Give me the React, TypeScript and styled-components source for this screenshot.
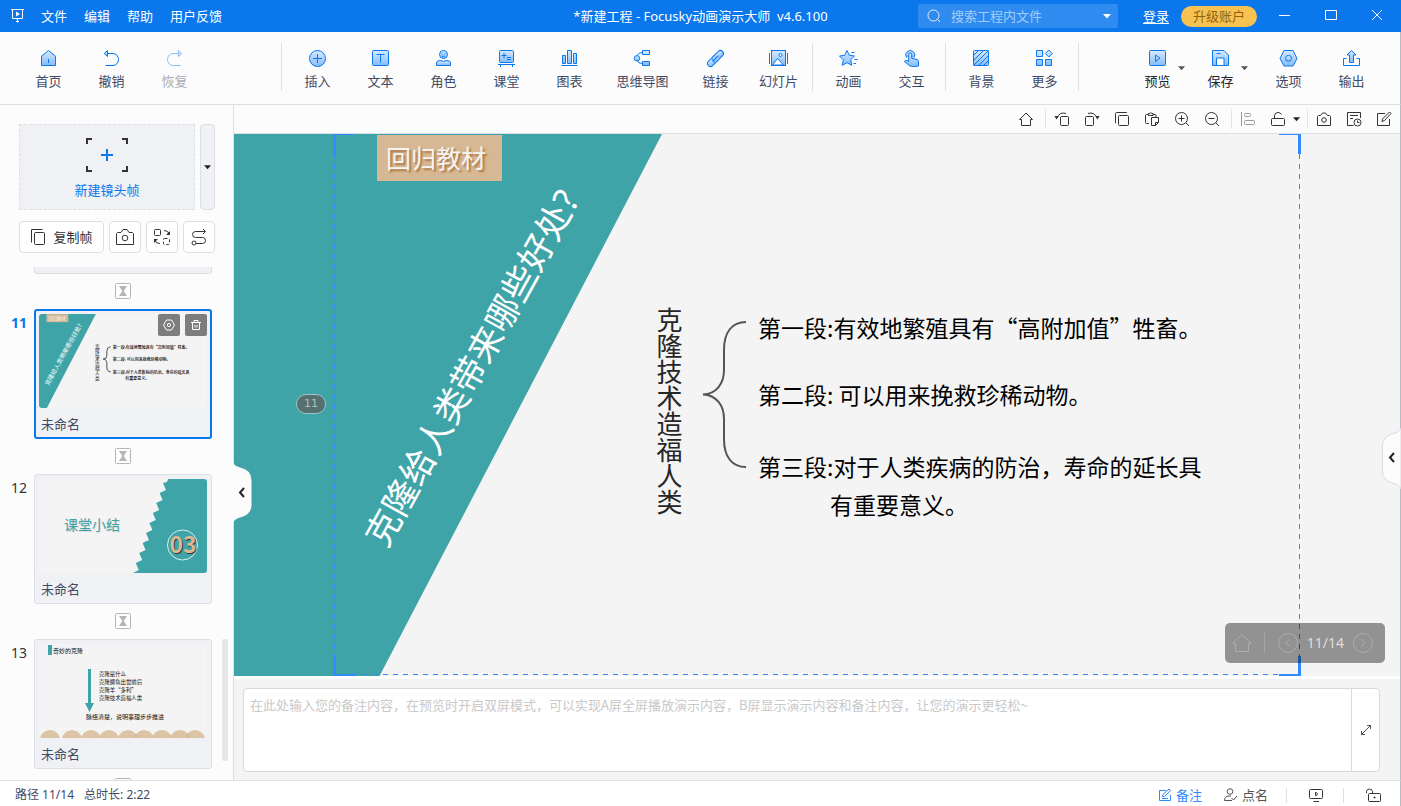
import React from "react";
import styled, { createGlobalStyle, css } from "styled-components";

const color = {
  brand: "#0a77ec",
  panel: "#fcfcfc",
  line: "#dcdfe3",
  card: "#f0f1f4",
  ink: "#3f4a63",
  dark: "#333333",
  teal: "#3ea4a8",
  tan: "#d6b994",
  slide: "#f4f4f4",
  select: "#2f8bff",
};

const Global = createGlobalStyle`
  *, *::before, *::after { box-sizing: border-box; }
  body {
    margin: 0;
    font-family: "Noto Sans", "Noto Sans CJK SC", sans-serif;
    font-size: 13px;
    line-height: 20px;
    color: ${color.ink};
  }
  button, input, textarea { font: inherit; color: inherit; }
  svg { display: block; flex: none; }
`;

const Shell = styled.div`
  display: flex;
  flex-direction: column;
  height: 100vh;
  background: ${color.panel};
  overflow: hidden;
`;

const PlainButton = styled.button`
  display: flex;
  align-items: center;
  justify-content: center;
  padding: 0;
  border: 0;
  background: none;
  cursor: pointer;
  white-space: nowrap;
`;

/* ---------- Title bar ---------- */

const TitleBar = styled.header`
  display: grid;
  grid-template-columns: 1fr auto 1fr;
  align-items: center;
  flex: none;
  height: 32px;
  background: ${color.brand};
  color: #fff;
`;

const MenuBar = styled.nav`
  display: flex;
  align-items: center;
  gap: 17px;
  padding-left: 10px;
`;

const AppTitle = styled.h1`
  margin: 0;
  font-size: 13px;
  font-weight: 400;
  line-height: 20px;
  white-space: pre;
`;

const TitleRight = styled.div`
  display: flex;
  align-items: center;
  justify-content: flex-end;
  padding-right: 1px;
`;

const SearchBox = styled.label`
  display: flex;
  align-items: center;
  gap: 10px;
  width: 200px;
  height: 24px;
  padding: 0 7px 0 9px;
  margin-right: 25px;
  border-radius: 2px;
  background: #2f8bef;
`;

const SearchInput = styled.input`
  flex: 1;
  min-width: 0;
  padding: 0;
  border: 0;
  outline: 0;
  background: none;
  line-height: 20px;
  &::placeholder {
    color: #a3cdf8;
    opacity: 1;
  }
`;

const LoginLink = styled.a`
  margin-right: 12px;
  color: #fff;
  text-decoration: underline;
  text-underline-offset: 2px;
`;

const Upgrade = styled(PlainButton)`
  width: 76px;
  height: 21px;
  margin-right: 5px;
  border-radius: 11px;
  background: #f7c250;
  color: #8f6410;
`;

const WindowButton = styled(PlainButton)`
  width: 46px;
  height: 32px;
`;

/* ---------- Ribbon ---------- */

const Ribbon = styled.div`
  display: flex;
  flex: none;
  height: 73px;
  padding: 0 17px;
  border-right: 1px solid #b8bcc2;
  border-bottom: 1px solid ${color.line};
`;

const RibbonGroup = styled.div<{ $lead?: boolean; $push?: boolean }>`
  display: flex;
  ${(p) => p.$lead && "margin-right: 73px;"}
  ${(p) => p.$push && "margin-left: auto;"}
`;

const RibbonRule = styled.span`
  width: 1px;
  height: 48px;
  margin: 11px 4px 0 2px;
  background: ${color.line};
`;

const RibbonCell = styled.div<{ $after?: number }>`
  position: relative;
  margin-right: ${(p) => p.$after ?? 0}px;
`;

const RibbonButton = styled(PlainButton)<{ $wide?: boolean; $tone?: "dark" | "off" }>`
  flex-direction: column;
  justify-content: flex-start;
  width: ${(p) => (p.$wide ? 83 : 63)}px;
  height: 72px;
  padding-top: 14px;
  color: ${(p) => (p.$tone === "dark" ? "#22262e" : p.$tone === "off" ? "#a9adb5" : color.ink)};
  svg {
    opacity: ${(p) => (p.$tone === "off" ? 0.45 : 1)};
  }
`;

const RibbonDrop = styled(PlainButton)`
  position: absolute;
  left: 49px;
  top: 30px;
  width: 12px;
  height: 12px;
`;

/* ---------- Body ---------- */

const Body = styled.div`
  position: relative;
  display: flex;
  flex: 1;
  min-height: 0;
  border-right: 1px solid #b8bcc2;
`;

const Sidebar = styled.aside`
  position: relative;
  display: flex;
  flex-direction: column;
  flex: none;
  width: 234px;
  border-right: 1px solid ${color.line};
`;

const FrameTools = styled.div`
  display: flex;
  flex-wrap: wrap;
  gap: 11px 5px;
  padding: 19px 18px 14px 19px;
`;

const NewFrame = styled(PlainButton)`
  flex-direction: column;
  gap: 8px;
  width: 176px;
  height: 86px;
  padding-top: 4px;
  border: 1px dashed ${color.line};
  background: ${color.card};
  color: ${color.brand};
`;

const NewFrameDrop = styled(PlainButton)`
  width: 15px;
  height: 86px;
  border: 1px solid ${color.line};
  border-radius: 4px;
  background: ${color.card};
`;

const ToolButton = styled(PlainButton)<{ $wide?: boolean }>`
  gap: 7px;
  width: ${(p) => (p.$wide ? 85 : 32)}px;
  height: 32px;
  border: 1px solid ${color.line};
  border-radius: 4px;
  background: #fff;
  color: ${color.dark};
`;

const FrameList = styled.ol`
  flex: 1;
  min-height: 0;
  margin: 0;
  padding: 0;
  overflow: hidden;
  list-style: none;
`;

const FrameItem = styled.li`
  display: grid;
  grid-template-columns: 34px 178px;
`;

const FrameNumber = styled.span<{ $active?: boolean }>`
  padding: 4px 7px 0 0;
  text-align: right;
  font-size: 14px;
  color: ${(p) => (p.$active ? color.brand : "#333")};
  font-weight: ${(p) => (p.$active ? 700 : 400)};
`;

const cardFace = css`
  border: 1px solid ${color.line};
  background: ${color.card};
`;

const CardTail = styled.div`
  ${cardFace}
  grid-column: 2;
  height: 7px;
  border-top: 0;
  border-radius: 0 0 3px 3px;
`;

const Card = styled.article<{ $active?: boolean }>`
  ${cardFace}
  position: relative;
  height: 130px;
  padding: 4px;
  border-radius: 3px;
  ${(p) => p.$active && `padding: 3px; border: 2px solid ${color.brand};`}
`;

const Thumb = styled.svg`
  width: 168px;
  height: 94px;
  border-radius: 3px;
  background: ${color.slide};
`;

const CardName = styled.p`
  margin: 0;
  padding: 6px 2px 0;
`;

const CardActions = styled.div`
  position: absolute;
  top: 3px;
  right: 3px;
  display: flex;
  gap: 5px;
`;

const CardAction = styled(PlainButton)`
  width: 22px;
  height: 22px;
  border-radius: 2px;
  background: #7d7d7d;
`;

const Interval = styled.div`
  grid-column: 2;
  display: flex;
  align-items: flex-start;
  justify-content: center;
  height: 35px;
  padding-top: 9px;
`;

const ScrollThumb = styled.span`
  position: absolute;
  right: 5px;
  bottom: 19px;
  width: 6px;
  height: 122px;
  border-radius: 2px;
  background: #e6e6e6;
`;

const Workspace = styled.main`
  display: flex;
  flex-direction: column;
  flex: 1;
  min-width: 0;
`;

const CanvasBar = styled.div`
  display: flex;
  align-items: center;
  justify-content: flex-end;
  flex: none;
  height: 29px;
  padding-right: 1px;
  border-bottom: 1px solid ${color.line};
`;

const CanvasButton = styled(PlainButton)<{ $off?: boolean }>`
  width: 30px;
  height: 28px;
  color: ${(p) => (p.$off ? "#9a9a9a" : color.dark)};
`;

const CanvasDrop = styled(PlainButton)`
  justify-content: flex-start;
  width: 10px;
  height: 28px;
`;

const CanvasRule = styled.span`
  width: 1px;
  height: 20px;
  margin: 0 1px 0 4px;
  background: #e4e4e4;
`;

/* ---------- Slide canvas ---------- */

const Stage = styled.section`
  position: relative;
  flex: 1;
  min-height: 0;
  overflow: hidden;
  background: ${color.slide};
`;

const TealSide = styled.div`
  position: absolute;
  inset: 0 auto 0 0;
  width: 428px;
  background: ${color.teal};
  clip-path: polygon(0 0, 100% 0, 34% 100%, 0 100%);
`;

const ChapterTag = styled.div`
  position: absolute;
  left: 143px;
  top: 1px;
  width: 125px;
  height: 46px;
  padding-left: 9px;
  background: ${color.tan};
  color: #f4f4f4;
  font-size: 25px;
  line-height: 46px;
  text-shadow: 2px 2px 2px #b0743e;
  white-space: nowrap;
`;

const SlantedTitle = styled.h2`
  position: absolute;
  left: 141px;
  top: 389px;
  margin: 0;
  color: #fff;
  font-size: 35px;
  font-weight: 400;
  line-height: 40px;
  white-space: nowrap;
  transform: rotate(-61deg);
  transform-origin: 0 50%;
`;

const VerticalTopic = styled.p`
  position: absolute;
  left: 414px;
  top: 173px;
  margin: 0;
  color: #262626;
  font-size: 26px;
  line-height: 40px;
  writing-mode: vertical-rl;
  white-space: nowrap;
`;

const Brace = styled.svg`
  position: absolute;
  left: 468px;
  top: 186px;
`;

const Point = styled.p<{ $x: number; $y: number }>`
  position: absolute;
  left: ${(p) => p.$x}px;
  top: ${(p) => p.$y}px;
  margin: 0;
  color: #000;
  font-family: "Noto Sans CJK SC", sans-serif;
  font-size: 23px;
  line-height: 40px;
  white-space: pre;
`;

const dash = (dir: string) =>
  `repeating-linear-gradient(${dir}, ${color.select} 0 5px, transparent 5px 10px)`;

const Selection = styled.div`
  position: absolute;
  inset: 0 99px 0 99px;
  pointer-events: none;
  background:
    ${dash("to bottom")} 1px 0 / 1px 100% no-repeat,
    ${dash("to bottom")} calc(100% - 1px) 0 / 1px 100% no-repeat,
    ${dash("to right")} 0 calc(100% - 1px) / 100% 1px no-repeat;
`;

const Corner = styled.span<{ $v: "top" | "bottom"; $h: "left" | "right" }>`
  position: absolute;
  ${(p) => p.$v}: 0;
  ${(p) => p.$h}: 0;
  width: 22px;
  height: 20px;
  border: 0 solid ${color.select};
  border-${(p) => p.$v}-width: ${(p) => (p.$v === "top" ? 1 : 2)}px;
  border-${(p) => p.$h}-width: 3px;
`;

const FrameBadge = styled.span`
  position: absolute;
  left: 62px;
  top: 260px;
  width: 30px;
  height: 20px;
  border: 1px solid #9cc4c4;
  border-radius: 10px;
  background: #56706f;
  color: #b5c0c0;
  font-family: "DejaVu Sans", sans-serif;
  font-size: 11px;
  line-height: 18px;
  text-align: center;
`;

const Pager = styled.div`
  position: absolute;
  right: 15px;
  bottom: 13px;
  display: flex;
  align-items: center;
  justify-content: space-between;
  width: 160px;
  height: 40px;
  padding: 0 12px 0 7px;
  border-radius: 5px;
  background: rgba(0, 0, 0, 0.4);
  color: #dedede;
  font-size: 14px;
`;

const PagerRule = styled.span`
  width: 1px;
  height: 20px;
  background: #a6a6a6;
`;

const PagerMain = styled.div`
  display: flex;
  align-items: center;
  gap: 9px;
`;

const SideHandle = styled.button<{ $side: "left" | "right" }>`
  position: absolute;
  ${(p) => (p.$side === "left" ? "left: 233px; top: 357px;" : "right: -1px; top: 323px;")}
  padding: 0;
  border: 0;
  background: none;
  cursor: pointer;
`;

/* ---------- Notes ---------- */

const NotesPanel = styled.section`
  flex: none;
  padding: 9px 20px 8px 9px;
  border-top: 3px solid #fff;
  background: ${color.slide};
`;

const NotesBox = styled.div`
  display: flex;
  height: 84px;
  border: 1px solid #d5d9e0;
  border-radius: 4px;
  background: #fff;
  overflow: hidden;
`;

const NotesInput = styled.textarea`
  flex: 1;
  min-width: 0;
  padding: 6px;
  border: 0;
  outline: 0;
  resize: none;
  background: none;
  font-family: "Noto Sans CJK SC", sans-serif;
  &::placeholder {
    color: #c9c9c9;
    opacity: 1;
  }
`;

const NotesExpand = styled(PlainButton)`
  width: 28px;
  border-left: 1px solid #d5d9e0;
  color: #555;
`;

/* ---------- Status bar ---------- */

const StatusBar = styled.footer`
  display: flex;
  align-items: center;
  flex: none;
  height: 26px;
  padding: 3px 19px 0 15px;
  border-top: 1px solid ${color.line};
  border-right: 1px solid #b8bcc2;
  background: #fff;
  font-size: 12px;
`;

const StatusText = styled.span`
  margin-right: 10px;
`;

const StatusActions = styled.div`
  display: flex;
  align-items: center;
  margin-left: auto;
  font-size: 13px;
`;

const StatusButton = styled(PlainButton)<{ $active?: boolean; $after?: number }>`
  gap: 4px;
  margin-right: ${(p) => p.$after ?? 0}px;
  color: ${(p) => (p.$active ? color.select : "#555")};
`;

const StatusRule = styled.span<{ $after: number }>`
  width: 1px;
  height: 15px;
  margin-right: ${(p) => p.$after}px;
  background: ${color.line};
`;

/* ---------- Icons ---------- */

const Caret = ({ fill = "#555", w = 8 }: { fill?: string; w?: number }) => (
  <svg width={w} height="5" viewBox="0 0 8 5" aria-hidden="true">
    <path d="M0 0H8L4 4.5Z" fill={fill} />
  </svg>
);

const glyphs: Record<string, React.ReactNode> = {
  home: (
    <>
      <path d="M5.5 10.2 12.5 4.5 19.5 10.2V19.5H5.5Z" />
      <path d="M12.5 13v4" />
    </>
  ),
  undo: (
    <g fill="none">
      <path d="M8.5 4.5 5.2 7.5 8.5 10.5Z" fill="url(#sky)" />
      <path d="M8.5 7.5H14a5.5 6 0 0 1 0 12H6.5" />
    </g>
  ),
  redo: (
    <g fill="none">
      <path d="M16.5 4.5 19.8 7.5 16.5 10.5Z" fill="url(#sky)" />
      <path d="M16.5 7.5H11a5.5 6 0 0 0 0 12h7.5" />
    </g>
  ),
  insert: (
    <>
      <circle cx="12.5" cy="12.5" r="8" />
      <path d="M12.5 8v9M8 12.5h9" />
    </>
  ),
  text: (
    <>
      <rect x="4.5" y="4.5" width="16" height="15" rx="1" />
      <path d="M8.5 8.5h8M12.5 8.5v8" />
    </>
  ),
  role: (
    <>
      <circle cx="12.5" cy="8.5" r="4" />
      <path d="M5.5 19.5V17q0-2.500 3.500-2.500 3.500 1.600 7 0 3.500 0 3.500 2.500v2.500Z" />
      <path d="M11 7.500v.8M14 7.500v.8M11 10q1.500 1 3 0" />
    </>
  ),
  classroom: (
    <>
      <rect x="5.5" y="4.5" width="14" height="12" rx="1" />
      <path d="M4 18.500h17M6.500 18.500v2.500M18.500 18.500v2.500M7.500 9.500h5M10 7v5M13 11.500h4M13 13.500h4" />
    </>
  ),
  chart: (
    <>
      <path d="M5.5 17.5v-8h3v8ZM10.5 17.5v-13h4v13ZM16.5 17.5v-10h3v10Z" />
      <path d="M4.5 19.5h16" />
    </>
  ),
  mind: (
    <>
      <path d="M7.5 9.5Q8 6.5 12.5 6.5M7.5 15Q8 17.5 12.5 17.5" fill="none" />
      <circle cx="7" cy="12.3" r="2.7" />
      <path d="M12.5 4.5h7v4h-7ZM12.5 15.5h7v4h-7Z" />
    </>
  ),
  link: (
    <>
      <g transform="rotate(-45 12.5 12.5)">
        <rect x="2.5" y="9.5" width="13" height="6" rx="3" />
        <rect x="9.5" y="9.5" width="13" height="6" rx="3" />
        <path d="M10 10h5v5h-5Z" stroke="none" fill="#a3cdfb" />
        <path d="M8.5 12.5h8" />
      </g>
    </>
  ),
  slides: (
    <>
      <rect x="5.5" y="4.5" width="14" height="15" />
      <path d="M6.5 19 11.5 12.5 17.5 19Z" fill="#fff" />
      <circle cx="14.5" cy="9" r="1.5" fill="#fff" />
      <path d="M3.5 7v11M21.5 7v11" />
    </>
  ),
  anim: (
    <>
      <path d="M11 4.5 13.3 9.3 18.5 10 14.7 13.8 15.7 19.3 11 16.7 6.3 19.3 7.3 13.8 3.5 10 8.7 9.3Z" />
      <path d="M15.5 6.5h3M18.5 13.5h3M17.5 17.5h2.5" />
    </>
  ),
  touch: (
    <>
      <path d="M7.5 11.5a4.5 4.5 0 1 1 7.500 0" />
      <path d="M9.7 15.5V8.3a1.5 1.5 0 0 1 3 0v4l5.300 1.200q1.500.5 1.500 2v4.500q-5 1.200-8.500 0L5.300 15.500q.8-2 2.700-1Z" />
    </>
  ),
  background: (
    <>
      <rect x="4.5" y="4.5" width="15" height="15" rx="1" />
      <path d="M4.5 9.5l5-5M4.5 14.5l10-10M4.5 19.5l15-15M9.5 19.5l10-10M14.5 19.5l5-5" />
    </>
  ),
  more: (
    <path d="M4.5 4.5h6v6h-6ZM4.5 13.5h6v6h-6ZM13.5 13.5h6v6h-6ZM16.8 4l3.500 3.500L16.800 11 13.300 7.500Z" />
  ),
  preview: (
    <>
      <rect x="4.5" y="4.5" width="16" height="15" rx="1" />
      <path d="M10.5 9 15 12.2l-4.500 3.300Z" />
    </>
  ),
  save: (
    <>
      <path d="M4.5 4.5H16l4.500 4.500v10.500h-16Z" />
      <path d="M8.5 19.5v-7.500h7.500v7.500Z" fill="#fff" />
      <path d="M8.5 7.5h4" />
    </>
  ),
  options: (
    <>
      <path d="M8 4.5h9l4 8-4 7.500H8l-4-7.500Z" />
      <circle cx="12.5" cy="12.3" r="3" />
    </>
  ),
  exportOut: (
    <>
      <path d="M12.5 4.500 17 9h-2.500v7.500h-4V9H8Z" />
      <path d="M7.5 12.5h-3v7h16v-7h-3" fill="none" />
    </>
  ),
};

const RibbonIcon = ({ name }: { name: string }) => (
  <svg width="25" height="25" viewBox="0 0 25 25" fill="url(#sky)" stroke={color.brand} aria-hidden="true">
    {glyphs[name]}
  </svg>
);

const lineGlyphs: Record<string, React.ReactNode> = {
  home: <path d="M2.5 9.5 9 3l6.500 6.500h-2v6h-9v-6Z" />,
  rotateLeft: (
    <>
      <rect x="7.5" y="6.5" width="8" height="9" rx="1" />
      <path d="M13 3.5Q6.5 1.5 4 8" />
      <path d="M1.5 6 5.5 6 3.5 9.5Z" fill="currentColor" stroke="none" />
    </>
  ),
  rotateRight: (
    <>
      <rect x="2.5" y="6.5" width="8" height="9" rx="1" />
      <path d="M5 3.5Q11.5 1.5 14 8" />
      <path d="M12.5 6 16.5 6 14.5 9.5Z" fill="currentColor" stroke="none" />
    </>
  ),
  copy: (
    <>
      <rect x="5.5" y="5.5" width="10" height="10" rx="1" />
      <path d="M3 13.5q-.5 0-.5-1v-9q0-1 1-1h9.500q1 0 1 .5" />
    </>
  ),
  paste: (
    <>
      <path d="M6 13.5H3.5q-1 0-1-1v-7q0-1 1-1h2M10 4.5h2q1 0 1 1v1.500" />
      <path d="M5.5 5.5v-2h1.500q.8-2 1.600 0h1.400v2Z" />
      <path d="M8.5 7.5h7v5l-3 3h-4ZM12.5 15.5v-3h3" />
    </>
  ),
  zoomIn: (
    <>
      <circle cx="8.5" cy="8.5" r="6" />
      <path d="M5.5 8.5h6M8.5 5.5v6M13 13l3 3" />
    </>
  ),
  zoomOut: (
    <>
      <circle cx="8.5" cy="8.5" r="6" />
      <path d="M5.5 8.5h6M13 13l3 3" />
    </>
  ),
  align: (
    <>
      <path d="M2.5 2v14" />
      <rect x="5.5" y="3.5" width="6" height="3" rx="1" />
      <rect x="5.5" y="10.5" width="10" height="4" rx="1" />
    </>
  ),
  unlock: (
    <>
      <rect x="2.5" y="8.5" width="13" height="7" rx="1" />
      <path d="M5.5 8.5V6q0-3.500 3.500-3.500 2.500 0 3.500 2" />
    </>
  ),
  camera: (
    <>
      <path d="M2.5 15.5v-9l1-1h2l2-2.500h3l2 2.500h2l1 1v9Z" />
      <circle cx="9" cy="10" r="2.3" />
    </>
  ),
  history: (
    <>
      <path d="M15.5 8V2.5h-13v13h6M5 5.5h8M5 8.5h3" />
      <circle cx="12.5" cy="12.5" r="3.5" />
      <path d="M12.5 10.5v2h2" />
    </>
  ),
  edit: (
    <>
      <path d="M10 3.5H2.5v12h12V9" />
      <path d="M7 11.5 7.5 9 14.5 2 16 3.5 9.5 10.5Z" />
    </>
  ),
};

const LineIcon = ({ name }: { name: string }) => (
  <svg width="18" height="18" viewBox="0 0 18 18" fill="none" stroke="currentColor" aria-hidden="true">
    {lineGlyphs[name]}
  </svg>
);

const Hourglass = () => (
  <svg width="16" height="16" viewBox="0 0 16 16" aria-hidden="true">
    <rect x=".5" y=".5" width="15" height="15" rx="1" fill="#fdfdfd" stroke="#b5b5b5" />
    <path d="M4 3h8L9 7.5v1L12 13H4L7 8.5v-1Z" fill="#b5b5b5" />
  </svg>
);

const HandleShape = ({ side }: { side: "left" | "right" }) => (
  <svg width="19" height="61" viewBox="0 0 19 61" aria-hidden="true">
    <g transform={side === "right" ? "translate(19 0) scale(-1 1)" : undefined}>
      <path
        d="M0 0Q1 4 7 5.500 18.500 8 18.500 18V43Q18.500 53 7 55.500 1 57 0 61Z"
        fill={color.panel}
        stroke={side === "right" ? "#dddddd" : "none"}
      />
    </g>
    <path d={side === "left" ? "M11 26 7 30.500 11 35" : "M12 25 8 29.500 12 34"} fill="none" stroke="#222" strokeWidth="2" />
  </svg>
);

/* ---------- Thumbnails ---------- */

const cjk = "'Noto Sans CJK SC', sans-serif";

const CloneThumb = () => (
  <Thumb viewBox="0 0 966 541" preserveAspectRatio="none" role="img" aria-label="回归教材" fontFamily={cjk}>
    <path d="M0 0H327L45 541H0Z" fill={color.teal} />
    <rect x="43" y="1" width="125" height="46" fill={color.tan} />
    <text x="53" y="33" fontSize="25" fill="#f4f4f4">回归教材</text>
    <text transform="translate(54 415) rotate(-61)" fontSize="35" fill="#fff">克隆给人类带来哪些好处?</text>
    <g fontSize="27" fill="#262626" textAnchor="middle">
      {[..."克隆技术造福人类"].map((ch, i) => (
        <text key={i} x="336" y={195 + i * 26}>{ch}</text>
      ))}
    </g>
    <path d="M412 188Q390 190 390 215V238Q390 260 369 260 390 260 390 284V306Q390 332 412 333" fill="none" stroke="#333" strokeWidth="5" />
    <g fontSize="23" fill="#000" stroke="#000" strokeWidth=".4">
      <text x="424" y="204">第一段:有效地繁殖具有“高附加值”牲畜。</text>
      <text x="424" y="271">第二段: 可以用来挽救珍稀动物。</text>
      <text x="424" y="343">第三段:对于人类疾病的防治，寿命的延长具</text>
      <text x="496" y="381">有重要意义。</text>
    </g>
  </Thumb>
);

/* Torn-paper edge: each tooth runs from its tip down to a notch, then out to the next tip. */
const teeth = Array.from({ length: 9 }, (_, i) => {
  const x = 124 - i * 3.4;
  const y = 4 + i * 10;
  return `L${x} ${y}L${x + 3} ${y + 7}`;
}).join("");

const SummaryThumb = () => (
  <Thumb viewBox="0 0 168 94" role="img" aria-label="课堂小结" fontFamily={cjk}>
    <path d={`M168 0H129L128 3${teeth}L94 94H168Z`} fill={color.teal} />
    <g fontSize="14">
      <text x="26" y="52" fill="#dcdcdc">课堂小结</text>
      <text x="25" y="51" fill={color.teal}>课堂小结</text>
    </g>
    <circle cx="143.5" cy="66" r="15" fill="none" stroke="#dff0f0" />
    <g fontSize="23" fontWeight="700" textAnchor="middle">
      <text x="145" y="75" fill="#3a3a3a">03</text>
      <text x="144" y="74" fill={color.tan}>03</text>
    </g>
  </Thumb>
);

const StepsThumb = () => (
  <Thumb viewBox="0 0 168 94" role="img" aria-label="奇妙的克隆" fontFamily={cjk}>
    <rect x="9" y="1" width="4" height="10" fill={color.teal} />
    <path d="M49 25h3v34h3L50.5 68 46 59h3Z" fill={color.teal} />
    <g fontSize="6" fill="#111">
      <text x="14" y="9">奇妙的克隆</text>
      <text x="47" y="75">脉络清楚，说明事理步步推进</text>
    </g>
    <g fontSize="5.4" fill="#111">
      <text x="60" y="31.5">克隆是什么</text>
      <text x="60" y="39.5">克隆鲫鱼出世前后</text>
      <text x="60" y="47.5">克隆羊“多利”</text>
      <text x="60" y="55.5">克隆技术造福人类</text>
    </g>
    {[11, 33, 52, 70, 89, 105, 123, 141, 156].map((x) => (
      <path key={x} d={`M${x - 10} 94C${x - 9} 90 ${x - 5} 86 ${x} 86S${x + 9} 90 ${x + 10} 94Z`} fill={color.tan} fillOpacity=".8" />
    ))}
  </Thumb>
);

const frames = [
  { no: 11, name: "未命名", active: true, art: <CloneThumb /> },
  { no: 12, name: "未命名", active: false, art: <SummaryThumb /> },
  { no: 13, name: "未命名", active: false, art: <StepsThumb /> },
];

type Tool = { icon: string; label: string; wide?: boolean; tone?: "dark" | "off"; drop?: boolean; after?: number };

const leadTools: Tool[] = [
  { icon: "home", label: "首页" },
  { icon: "undo", label: "撤销" },
  { icon: "redo", label: "恢复", tone: "off" },
];
const toolGroups: Tool[][] = [
  [
    { icon: "insert", label: "插入" },
    { icon: "text", label: "文本" },
    { icon: "role", label: "角色" },
    { icon: "classroom", label: "课堂" },
    { icon: "chart", label: "图表" },
    { icon: "mind", label: "思维导图", wide: true },
    { icon: "link", label: "链接" },
    { icon: "slides", label: "幻灯片" },
  ],
  [
    { icon: "anim", label: "动画" },
    { icon: "touch", label: "交互" },
  ],
  [
    { icon: "background", label: "背景" },
    { icon: "more", label: "更多" },
  ],
];
const endTools: Tool[] = [
  { icon: "preview", label: "预览", tone: "dark", drop: true },
  { icon: "save", label: "保存", tone: "dark", drop: true, after: 5 },
  { icon: "options", label: "选项" },
  { icon: "exportOut", label: "输出" },
];

const RibbonTool = ({ tool }: { tool: Tool }) => (
  <RibbonCell $after={tool.after}>
    <RibbonButton $wide={tool.wide} $tone={tool.tone} disabled={tool.tone === "off"}>
      <RibbonIcon name={tool.icon} />
      {tool.label}
    </RibbonButton>
    {tool.drop && (
      <RibbonDrop aria-label={`${tool.label}选项`}>
        <Caret w={7} />
      </RibbonDrop>
    )}
  </RibbonCell>
);

const CanvasTool = ({ icon, label, off }: { icon: string; label: string; off?: boolean }) => (
  <CanvasButton $off={off} aria-label={label}>
    <LineIcon name={icon} />
  </CanvasButton>
);

export default function App() {
  return (
    <Shell>
      <Global />
      <svg width="0" height="0" aria-hidden="true">
        <defs>
          <linearGradient id="sky" x1="0" y1="0" x2="0" y2="1">
            <stop offset="0" stopColor="#d6e9ff" />
            <stop offset="1" stopColor="#84bcfa" />
          </linearGradient>
        </defs>
      </svg>

      <TitleBar>
        <MenuBar>
          <svg width="14" height="18" viewBox="0 0 14 18" fill="none" stroke="#fff" aria-hidden="true">
            <path d="M1 2.5h13M2.5 2.5v9h10v-9M7.5 11.5v4M6 14.5h3" />
            <path d="M6 4.5 10 7 6 9.5Z" fill="#fff" stroke="none" />
          </svg>
          {["文件", "编辑", "帮助", "用户反馈"].map((m) => (
            <PlainButton key={m}>{m}</PlainButton>
          ))}
        </MenuBar>
        <AppTitle>{"*新建工程 - Focusky动画演示大师  v4.6.100"}</AppTitle>
        <TitleRight>
          <SearchBox>
            <svg width="14" height="14" viewBox="0 0 14 14" fill="none" stroke="#e4f0fd" aria-hidden="true">
              <circle cx="6.5" cy="6.5" r="5.5" />
              <path d="M10.5 10.5 13 13" />
            </svg>
            <SearchInput placeholder="搜索工程内文件" aria-label="搜索工程内文件" />
            <Caret fill="#fff" />
          </SearchBox>
          <LoginLink href="#login">登录</LoginLink>
          <Upgrade>升级账户</Upgrade>
          <WindowButton aria-label="最小化">
            <svg width="12" height="12" viewBox="0 0 12 12" stroke="#fff"><path d="M0 5.5h11" /></svg>
          </WindowButton>
          <WindowButton aria-label="最大化">
            <svg width="12" height="12" viewBox="0 0 12 12" stroke="#fff" fill="none"><path d="M.5 .5h11v9H.5Z" /></svg>
          </WindowButton>
          <WindowButton aria-label="关闭">
            <svg width="12" height="12" viewBox="0 0 12 12" stroke="#fff"><path d="M1 0l10 10M11 0 1 10" /></svg>
          </WindowButton>
        </TitleRight>
      </TitleBar>

      <Ribbon>
        <RibbonGroup $lead>
          {leadTools.map((t) => <RibbonTool key={t.label} tool={t} />)}
        </RibbonGroup>
        <RibbonRule />
        {toolGroups.map((group, i) => (
          <React.Fragment key={i}>
            <RibbonGroup>
              {group.map((t) => <RibbonTool key={t.label} tool={t} />)}
            </RibbonGroup>
            <RibbonRule />
          </React.Fragment>
        ))}
        <RibbonGroup $push>
          {endTools.map((t) => <RibbonTool key={t.label} tool={t} />)}
        </RibbonGroup>
      </Ribbon>

      <Body>
        <Sidebar>
          <FrameTools>
            <NewFrame>
              <svg width="42" height="34" viewBox="0 0 42 34" fill="none" aria-hidden="true">
                <path d="M1 6V1h5M36 1h5v5M41 28v5h-5M6 33H1v-5" stroke="#333" strokeWidth="2" />
                <path d="M15 17h12M21 11v12" stroke={color.brand} strokeWidth="2" />
              </svg>
              新建镜头帧
            </NewFrame>
            <NewFrameDrop aria-label="更多镜头帧类型"><Caret fill="#222" w={7} /></NewFrameDrop>
            <ToolButton $wide>
              <svg width="16" height="18" viewBox="0 0 16 18" fill="none" stroke="currentColor" aria-hidden="true">
                <path d="M1.5 14.5v-13h11" />
                <rect x="4.5" y="4.5" width="10" height="12" rx="1" />
              </svg>
              复制帧
            </ToolButton>
            <ToolButton aria-label="截图">
              <svg width="20" height="18" viewBox="0 0 20 18" fill="none" stroke="currentColor" aria-hidden="true">
                <path d="M1.5 16.5v-11l1-1H6l2-3h4l2 3h3.500l1 1v11Z" />
                <circle cx="10" cy="10" r="2.8" />
              </svg>
            </ToolButton>
            <ToolButton aria-label="替换帧">
              <svg width="18" height="18" viewBox="0 0 18 18" fill="none" stroke="currentColor" aria-hidden="true">
                <rect x="1.5" y="1.5" width="6" height="6" rx="1" />
                <rect x="10.5" y="10.5" width="6" height="6" rx="1" strokeDasharray="3 2" />
                <path d="M11 2.5q4 0 5 3M7 15.5q-4 0-5-3" />
                <path d="M17 3v4h-4ZM1 15v-4h4Z" fill="currentColor" stroke="none" />
              </svg>
            </ToolButton>
            <ToolButton aria-label="编辑路径">
              <svg width="18" height="18" viewBox="0 0 18 18" fill="none" stroke="currentColor" aria-hidden="true">
                <path d="M15 3.5H5.5a3 3 0 0 0 0 6h7a3 3 0 0 1 0 6H6M13 1l2.500 2.500L13 6" />
                <circle cx="4" cy="15" r="2" />
              </svg>
            </ToolButton>
          </FrameTools>

          <FrameList>
            <FrameItem>
              <CardTail />
              <Interval><Hourglass /></Interval>
            </FrameItem>
            {frames.map((f) => (
              <FrameItem key={f.no}>
                <FrameNumber $active={f.active}>{f.no}</FrameNumber>
                <Card $active={f.active}>
                  {f.art}
                  {f.active && (
                    <CardActions>
                      <CardAction aria-label="设置">
                        <svg width="12" height="12" viewBox="0 0 12 12" fill="none" stroke="#fff">
                          <path d="M3.5 1h5L11.5 6 8.5 11h-5L.5 6Z" />
                          <circle cx="6" cy="6" r="1.6" />
                        </svg>
                      </CardAction>
                      <CardAction aria-label="删除">
                        <svg width="12" height="12" viewBox="0 0 12 12" fill="none" stroke="#fff">
                          <path d="M1 3.5h10M4 3.5v-2h4v2M2.5 3.5v7h7v-7M5 6v2.500M7 6v2.500" />
                        </svg>
                      </CardAction>
                    </CardActions>
                  )}
                  <CardName>{f.name}</CardName>
                </Card>
                <Interval><Hourglass /></Interval>
              </FrameItem>
            ))}
          </FrameList>
          <ScrollThumb />
        </Sidebar>

        <Workspace>
          <CanvasBar>
            <CanvasTool icon="home" label="主页" />
            <CanvasRule />
            <CanvasTool icon="rotateLeft" label="向左旋转" />
            <CanvasTool icon="rotateRight" label="向右旋转" />
            <CanvasTool icon="copy" label="复制" />
            <CanvasTool icon="paste" label="粘贴" />
            <CanvasTool icon="zoomIn" label="放大" />
            <CanvasTool icon="zoomOut" label="缩小" />
            <CanvasRule />
            <CanvasTool icon="align" label="对齐" off />
            <CanvasTool icon="unlock" label="锁定" />
            <CanvasDrop aria-label="锁定选项"><Caret fill="#222" w={7} /></CanvasDrop>
            <CanvasRule />
            <CanvasTool icon="camera" label="截图" />
            <CanvasTool icon="history" label="历史记录" />
            <CanvasTool icon="edit" label="编辑" />
          </CanvasBar>

          <Stage>
            <TealSide />
            <ChapterTag>回归教材</ChapterTag>
            <SlantedTitle>克隆给人类带来哪些好处?</SlantedTitle>
            <VerticalTopic>克隆技术造福人类</VerticalTopic>
            <Brace width="46" height="150" viewBox="0 0 46 150" fill="none" stroke="#555" strokeWidth="2" aria-hidden="true">
              <path d="M44 2C30 2 22 12 22 30V50C22 64 14 74 1 74.500 14 75 22 85 22 99V119C22 137 30 147 44 147" />
            </Brace>
            <Point $x={524} $y={173}>第一段:有效地繁殖具有“高附加值”牲畜。</Point>
            <Point $x={524} $y={240}>第二段: 可以用来挽救珍稀动物。</Point>
            <Point $x={524} $y={312}>第三段:对于人类疾病的防治，寿命的延长具</Point>
            <Point $x={596} $y={350}>有重要意义。</Point>
            <Selection>
              <Corner $v="top" $h="left" />
              <Corner $v="top" $h="right" />
              <Corner $v="bottom" $h="left" />
              <Corner $v="bottom" $h="right" />
            </Selection>
            <FrameBadge>11</FrameBadge>
            <Pager>
              <PlainButton aria-label="首帧">
                <svg width="20" height="20" viewBox="0 0 20 20" fill="none" stroke="#adadad">
                  <path d="M.8 10.5 10 1.5l9.200 9H16.500v8h-13v-8Z" />
                </svg>
              </PlainButton>
              <PagerRule />
              <PagerMain>
                <PlainButton aria-label="上一帧">
                  <svg width="20" height="20" viewBox="0 0 20 20" fill="none" stroke="#adadad">
                    <circle cx="10" cy="10" r="9.5" /><path d="M12 6l-4 4 4 4" />
                  </svg>
                </PlainButton>
                <span>11/14</span>
                <PlainButton aria-label="下一帧">
                  <svg width="20" height="20" viewBox="0 0 20 20" fill="none" stroke="#adadad">
                    <circle cx="10" cy="10" r="9.5" /><path d="M8 6l4 4-4 4" />
                  </svg>
                </PlainButton>
              </PagerMain>
            </Pager>
          </Stage>

          <NotesPanel>
            <NotesBox>
              <NotesInput
                aria-label="备注"
                placeholder="在此处输入您的备注内容，在预览时开启双屏模式，可以实现A屏全屏播放演示内容，B屏显示演示内容和备注内容，让您的演示更轻松~"
              />
              <NotesExpand aria-label="展开备注">
                <svg width="12" height="12" viewBox="0 0 12 12" fill="none" stroke="currentColor">
                  <path d="M7 1.5h3.500V5M1.500 7v3.500H5M10.500 1.500l-9 9" />
                </svg>
              </NotesExpand>
            </NotesBox>
          </NotesPanel>
        </Workspace>

        <SideHandle $side="left" aria-label="收起左侧面板"><HandleShape side="left" /></SideHandle>
        <SideHandle $side="right" aria-label="展开右侧面板"><HandleShape side="right" /></SideHandle>
      </Body>

      <StatusBar>
        <StatusText>路径 11/14</StatusText>
        <StatusText>总时长: 2:22</StatusText>
        <StatusActions>
          <StatusButton $active $after={21}>
            <svg width="14" height="14" viewBox="0 0 14 14" fill="none" stroke="currentColor" aria-hidden="true">
              <path d="M8 2.5H1.5v10h11V7M4 10.5h6" />
              <path d="M4.5 8.5 5 6.5 11 1 12.5 2.5 6.5 8.5Z" />
            </svg>
            备注
          </StatusButton>
          <StatusButton $after={18}>
            <svg width="15" height="14" viewBox="0 0 15 14" fill="none" stroke="currentColor" aria-hidden="true">
              <circle cx="7" cy="3.5" r="2.8" />
              <path d="M9 12.5H1.5Q1.5 8 6 8h2M8.5 10l2 2 3.500-4" />
            </svg>
            点名
          </StatusButton>
          <StatusRule $after={22} />
          <StatusButton aria-label="播放设置" $after={19}>
            <svg width="15" height="14" viewBox="0 0 15 14" fill="none" stroke="#333">
              <rect x=".5" y="1.5" width="13" height="9" rx="1" />
              <path d="M4.5 13.5h5.500M6.500 4.500v3h1l1-1.500-1-1.500Z" />
            </svg>
          </StatusButton>
          <StatusRule $after={22} />
          <StatusButton aria-label="解锁">
            <svg width="15" height="14" viewBox="0 0 15 14" fill="none" stroke="#333">
              <rect x="2.5" y="5.5" width="12" height="8" rx="1" />
              <path d="M.5 5V3.5Q1 1 3.500 1T6.500 3.500v2M8 9h1v1H8Z" />
            </svg>
          </StatusButton>
        </StatusActions>
      </StatusBar>
    </Shell>
  );
}
